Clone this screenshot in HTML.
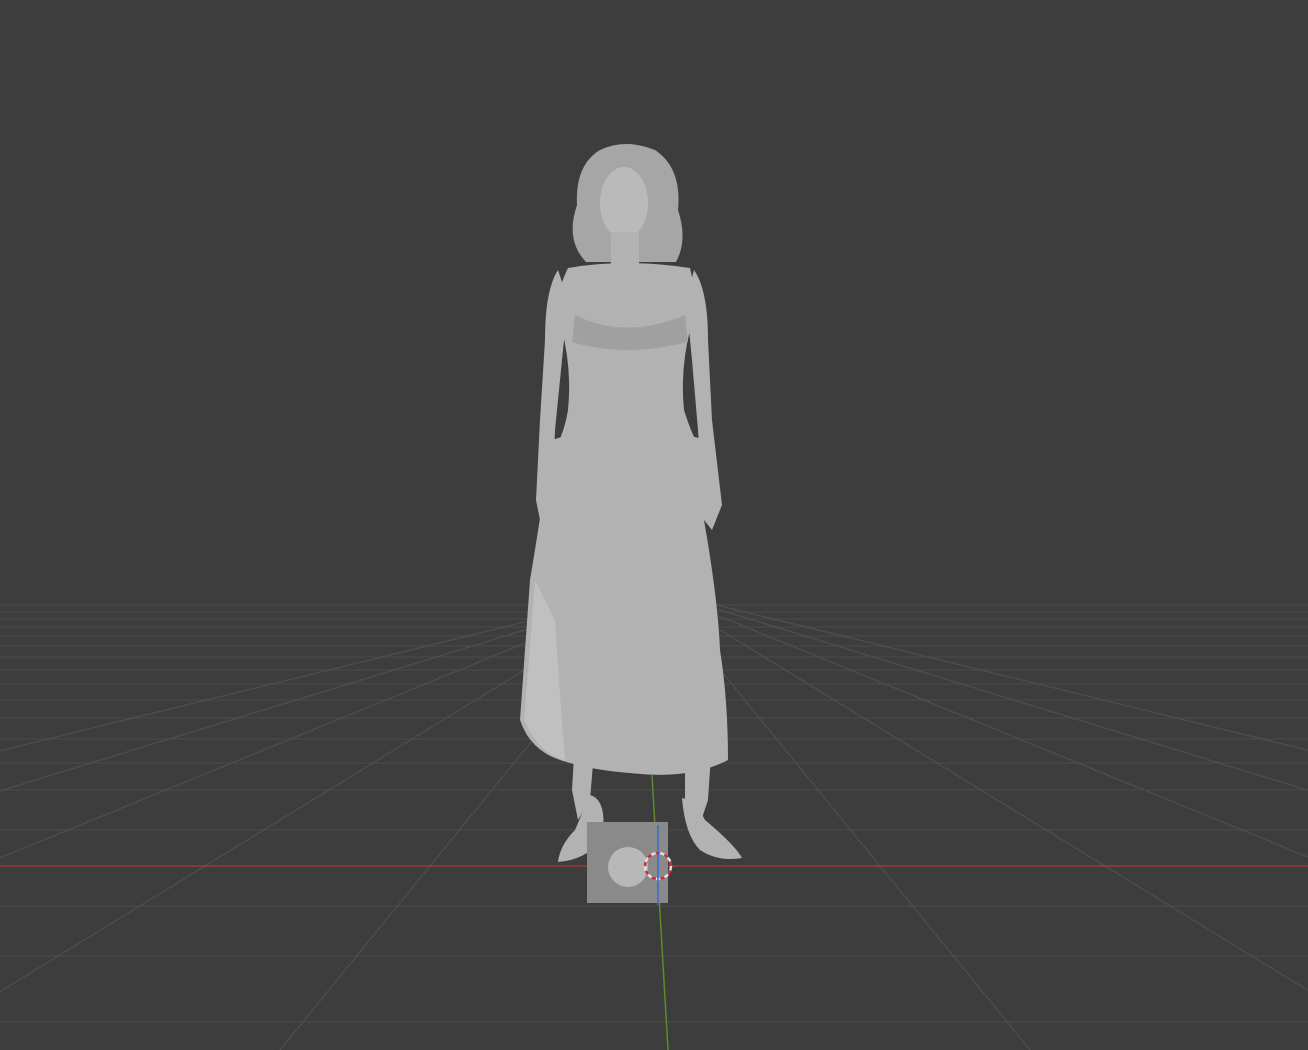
<!DOCTYPE html>
<html><head><style>
html,body{margin:0;padding:0;background:#3d3d3d;width:1308px;height:1050px;overflow:hidden}
svg{display:block}
</style></head><body>
<svg width="1308" height="1050" viewBox="0 0 1308 1050" xmlns="http://www.w3.org/2000/svg">
<rect width="1308" height="1050" fill="#3d3d3d"/>
<g stroke="#494949" stroke-width="1.2" fill="none">
<line x1="0" y1="605" x2="1308" y2="605"/>
<line x1="0" y1="612" x2="1308" y2="612"/>
<line x1="0" y1="619" x2="1308" y2="619"/>
<line x1="0" y1="627" x2="1308" y2="627"/>
<line x1="0" y1="636" x2="1308" y2="636"/>
<line x1="0" y1="646" x2="1308" y2="646"/>
<line x1="0" y1="657" x2="1308" y2="657"/>
<line x1="0" y1="670" x2="1308" y2="670"/>
<line x1="0" y1="684" x2="1308" y2="684"/>
<line x1="0" y1="700" x2="1308" y2="700"/>
<line x1="0" y1="718" x2="1308" y2="718"/>
<line x1="0" y1="739" x2="1308" y2="739"/>
<line x1="0" y1="763" x2="1308" y2="763"/>
<line x1="0" y1="790" x2="1308" y2="790"/>
<line x1="0" y1="830" x2="1308" y2="830"/>
<line x1="0" y1="906" x2="1308" y2="906"/>
<line x1="0" y1="956" x2="1308" y2="956"/>
<line x1="0" y1="1022" x2="1308" y2="1022"/>
</g>
<g stroke="#4f4f4f" stroke-width="1.2" fill="none">
<line x1="655" y1="590" x2="-1220" y2="1050"/>
<line x1="655" y1="590" x2="-845" y2="1050"/>
<line x1="655" y1="590" x2="-470" y2="1050"/>
<line x1="655" y1="590" x2="-95" y2="1050"/>
<line x1="655" y1="590" x2="280" y2="1050"/>
<line x1="655" y1="590" x2="1030" y2="1050"/>
<line x1="655" y1="590" x2="1405" y2="1050"/>
<line x1="655" y1="590" x2="1780" y2="1050"/>
<line x1="655" y1="590" x2="2155" y2="1050"/>
<line x1="655" y1="590" x2="2530" y2="1050"/>
</g>
<rect x="0" y="0" width="1308" height="602" fill="#3d3d3d"/>
<line x1="0" y1="866" x2="1308" y2="866" stroke="#9a3a3a" stroke-width="1.5"/>
<line x1="652" y1="775" x2="668" y2="1050" stroke="#5e8a2a" stroke-width="1.5"/>
<!-- figure -->
<g fill="#b2b2b2">
<path d="M600 150 Q625 138 655 150 Q682 168 678 210 Q688 240 676 262 L586 262 Q565 240 577 205 Q575 165 600 150Z" fill="#a6a6a6"/>
<ellipse cx="624" cy="203" rx="24" ry="36" fill="#bababa"/>
<rect x="611" y="232" width="28" height="40"/>
<path d="M568 268 Q625 258 690 268 Q698 300 690 330 Q680 370 684 410 Q690 430 700 450 L555 450 Q565 430 568 410 Q572 370 562 330 Q552 300 568 268Z"/>
<path d="M558 270 Q545 290 545 340 L540 420 L536 500 L542 530 L556 525 L552 505 L555 430 L562 360 L568 300Z"/>
<path d="M694 270 Q708 290 708 340 L712 420 L722 505 L712 530 L704 520 L703 500 L698 430 L692 360 L686 300Z"/>
<path d="M575 315 Q625 340 685 315 L688 342 Q625 358 572 342Z" fill="#a0a0a0"/>
<path d="M552 440 Q625 415 705 440 Q710 480 704 520 Q718 600 720 650 Q728 700 728 760 Q690 780 630 773 Q590 770 560 760 Q530 750 520 720 Q525 650 530 580 Q540 520 552 440Z"/>
<path d="M524 720 Q530 650 535 580 L555 620 Q560 700 565 760 Q540 755 524 720Z" fill="#c0c0c0"/>
<path d="M575 740 L572 790 L578 820 L590 800 L595 740Z"/>
<path d="M685 750 L685 800 L698 830 L708 800 L712 740Z"/>
<path d="M590 795 Q608 800 602 840 Q585 860 558 862 Q560 845 575 830Z"/>
<path d="M682 798 Q695 800 705 820 Q735 845 742 858 Q718 862 700 850 Q685 835 682 798Z"/>
</g>
<rect x="587" y="822" width="81" height="81" fill="#8a8a8a"/>
<circle cx="628" cy="867" r="20" fill="#b8b8b8"/>
<circle cx="658" cy="866" r="13" fill="none" stroke="#e0e0e0" stroke-width="2.5" stroke-dasharray="5 4"/>
<circle cx="658" cy="866" r="13" fill="none" stroke="#d23030" stroke-width="2.5" stroke-dasharray="4 5" stroke-dashoffset="4.5"/>
<line x1="658" y1="825" x2="658" y2="905" stroke="#3a6ad0" stroke-width="1.5"/>
</svg>
</body></html>
